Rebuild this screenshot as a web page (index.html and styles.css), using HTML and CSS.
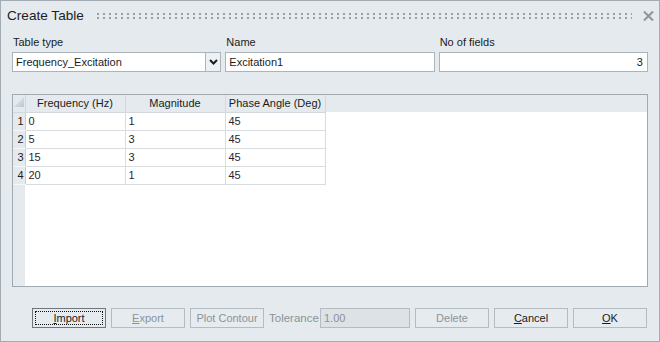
FILE: index.html
```html
<!DOCTYPE html>
<html lang="en">
<head>
    <meta charset="UTF-8">
    <title>Create Table</title>
    <link rel="stylesheet" href="styles.css">
</head>
<body>
    <div class="dialog">
        <!-- Title bar -->
        <div class="titlebar">
            <span class="title">Create Table</span>
            <span class="grip"></span>
            <svg class="close" width="11" height="10" viewBox="0 0 11 10">
                <path d="M1 0.5 L10 9.5 M10 0.5 L1 9.5" stroke="#8e9398" stroke-width="2" fill="none"/>
            </svg>
        </div>

        <!-- Top fields -->
        <div class="fields">
            <div class="field">
                <label>Table type</label>
                <div class="select">
                    <span class="select-value">Frequency_Excitation</span>
                    <span class="select-btn">
                        <svg width="9" height="6" viewBox="0 0 9 6">
                            <path d="M1 1 L4.5 4.5 L8 1" stroke="#1c1c1c" stroke-width="2" fill="none"/>
                        </svg>
                    </span>
                </div>
            </div>
            <div class="field">
                <label>Name</label>
                <div class="input">Excitation1</div>
            </div>
            <div class="field">
                <label>No of fields</label>
                <div class="input num">3</div>
            </div>
        </div>

        <!-- Data grid -->
        <div class="grid">
            <table class="data">
                <colgroup>
                    <col class="c-row">
                    <col class="c-col">
                    <col class="c-col">
                    <col class="c-col">
                </colgroup>
                <thead>
                    <tr>
                        <th class="corner">
                            <svg width="10" height="10" viewBox="0 0 10 10">
                                <defs>
                                    <linearGradient id="cg" x1="0" y1="0" x2="1" y2="1">
                                        <stop offset="0" stop-color="#e8eef3"/>
                                        <stop offset="1" stop-color="#b9c7d3"/>
                                    </linearGradient>
                                </defs>
                                <polygon points="0,10 10,10 10,0" fill="url(#cg)"/>
                            </svg>
                        </th>
                        <th>Frequency (Hz)</th>
                        <th>Magnitude</th>
                        <th>Phase Angle (Deg)</th>
                    </tr>
                </thead>
                <tbody>
                    <tr><td class="rownum">1</td><td>0</td><td>1</td><td>45</td></tr>
                    <tr><td class="rownum">2</td><td>5</td><td>3</td><td>45</td></tr>
                    <tr><td class="rownum">3</td><td>15</td><td>3</td><td>45</td></tr>
                    <tr><td class="rownum">4</td><td>20</td><td>1</td><td>45</td></tr>
                </tbody>
            </table>
        </div>

        <!-- Bottom buttons -->
        <div class="actions">
            <button class="btn focused"><u>I</u>mport</button>
            <button class="btn disabled"><u>E</u>xport</button>
            <button class="btn disabled">Plot Contour</button>
            <span class="tol-label">Tolerance</span>
            <div class="tol-input">1.00</div>
            <button class="btn disabled">Delete</button>
            <button class="btn"><u>C</u>ancel</button>
            <button class="btn"><u>O</u>K</button>
        </div>
    </div>
</body>
</html>
```

FILE: styles.css
```css
/* Reset */
* {
    margin: 0;
    padding: 0;
    box-sizing: border-box;
}

body {
    font-family: "Liberation Sans", Arial, sans-serif;
    font-size: 11px;
    color: #1b1b1b;
    background-color: #e4eaee;
}

.dialog {
    width: 660px;
    height: 342px;
    border: 1px solid #a3acb3;
    background-color: #e4eaee;
    display: flex;
    flex-direction: column;
}

/* Title bar */
.titlebar {
    height: 29px;
    display: flex;
    align-items: center;
    padding: 0 5px 0 6px;
}

.title {
    font-size: 13.6px;
    color: #1e1e1e;
}

.grip {
    flex: 1;
    height: 6px;
    margin: 0 11px 0 13px;
    background:
        linear-gradient(90deg, transparent 2px, #e4eaee 2px) 0 0 / 6px 4px,
        linear-gradient(#9a9fa4 2px, transparent 2px) 0 0 / 6px 4px;
}

.close {
    display: block;
}

/* Fields */
.fields {
    display: grid;
    grid-template-columns: repeat(3, 1fr);
    gap: 4px;
    padding: 0 11px;
    margin-top: 5px;
}

.field label {
    display: block;
    line-height: 14px;
    margin-bottom: 3px;
    padding-left: 1px;
}

.select {
    display: flex;
    height: 20px;
}

.select-value,
.input {
    height: 20px;
    line-height: 18px;
    background-color: #fff;
    border: 1px solid #acb4bb;
    padding: 0 3px;
}

.select-value {
    flex: 1;
}

.select-btn {
    width: 15px;
    height: 20px;
    border: 1px solid #acb4bb;
    border-left: none;
    background-color: #eef1f3;
    display: flex;
    align-items: center;
    justify-content: center;
}

.input.num {
    text-align: right;
    padding-right: 4px;
}

/* Grid */
.grid {
    flex: 1;
    margin: 22px 11px 0;
    border: 1px solid #a0a9b0;
    background:
        linear-gradient(#e4eaee 17px, transparent 17px),
        linear-gradient(90deg, #e4eaee 12px, #fff 12px);
    overflow: hidden;
}

.data {
    border-collapse: collapse;
    table-layout: fixed;
    width: 312px;
}

.c-row {
    width: 12px;
}

.c-col {
    width: 100px;
}

.data th {
    height: 17px;
    font-weight: normal;
    text-align: center;
    background-color: #e4eaee;
    border-right: 1px solid #d2d8dc;
    border-bottom: 1px solid #d2d8dc;
    padding: 0;
}

.data th.corner {
    text-align: left;
    padding: 2px 0 0 1px;
    vertical-align: top;
}

.data th.corner svg {
    display: block;
}

.data td {
    height: 18px;
    padding: 0 3px;
    color: #2e1f2d;
    background-color: #fff;
    border-right: 1px solid #d8dde1;
    border-bottom: 1px solid #d8dde1;
}

.data td.rownum {
    background-color: #e4eaee;
    text-align: right;
    padding: 0 1px 0 0;
    color: #1b1b1b;
    border-bottom-color: #f4f6f7;
    border-right-color: #c9d0d5;
}

/* Bottom buttons */
.actions {
    display: flex;
    align-items: center;
    gap: 5px;
    margin-top: 21px;
    padding: 0 11px 13px 31px;
}

.btn {
    width: 74px;
    height: 20px;
    font-family: inherit;
    font-size: 11px;
    color: #1b1b1b;
    background-color: #e6ebef;
    border: 1px solid #b4bbc1;
    border-radius: 0;
}

.btn.focused {
    border-color: #6f757a;
    outline: 1px dotted #111;
    outline-offset: -4px;
}

.btn.disabled {
    color: #8c9398;
}

.tol-label {
    width: 46px;
    color: #8c9398;
    font-size: 11.5px;
}

.tol-input {
    width: 90px;
    height: 20px;
    line-height: 18px;
    padding: 0 3px;
    color: #8c9398;
    background-color: #dce2e6;
    border: 1px solid #b4bbc1;
}
```
